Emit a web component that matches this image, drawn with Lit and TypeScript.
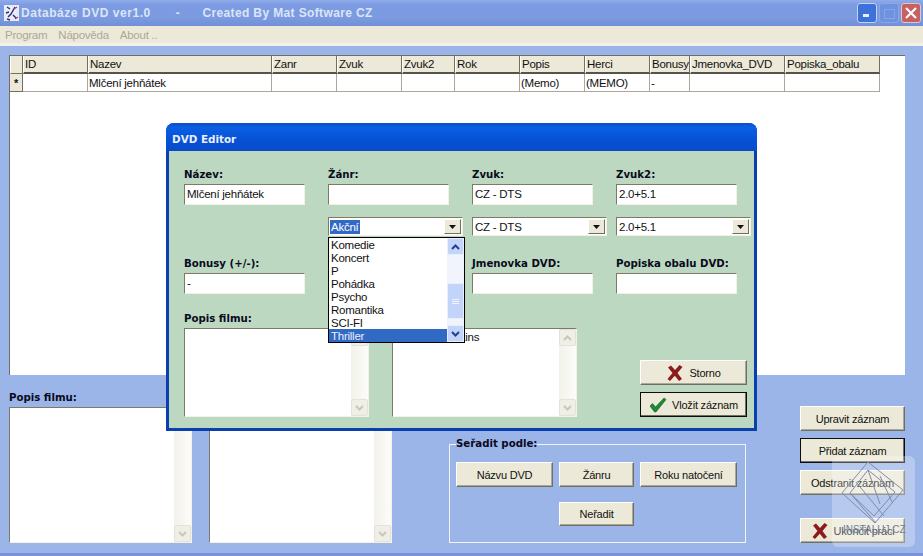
import { LitElement, html, css, svg } from "lit";
import { customElement } from "lit/decorators.js";

const FONT = css`"Liberation Sans", Arial, sans-serif`;

const xIcon = html`<svg class="ico" width="18" height="18" viewBox="0 0 18 18"><path d="M2 3.5 5 1.5 9 6 13.5 1 16.5 3 11.5 9 16 15 13 17 8.8 11.8 4 17 1.5 15 6.5 9Z" fill="#8c1c1c"/></svg>`;
const checkIcon = html`<svg class="ico" width="18" height="16" viewBox="0 0 18 16"><path d="M1 9 3.5 6.5 6.5 10 15 1 17 2.5 7 15 5.5 15Z" fill="#1e8a33" stroke="#0d5a1e" stroke-width=".6"/></svg>`;
const chev = (up: boolean, c: string) => html`<svg width="9" height="6" viewBox="0 0 9 6"><path d=${up ? "M1 5 4.5 1.5 8 5" : "M1 1 4.5 4.5 8 1"} fill="none" stroke=${c} stroke-width="2"/></svg>`;
const arrow = html`<svg width="7" height="4" viewBox="0 0 7 4"><path d="M0 0H7L3.5 4Z" fill="#111"/></svg>`;

const COLS: [string, number][] = [
  ["ID", 65], ["Nazev", 184], ["Zanr", 65], ["Zvuk", 65], ["Zvuk2", 53], ["Rok", 65],
  ["Popis", 65], ["Herci", 65], ["Bonusy", 40], ["Jmenovka_DVD", 95], ["Popiska_obalu", 95],
];
const ROW: string[] = ["", "Mlčení jehňátek", "", "", "", "", "(Memo)", "(MEMO)", "-", "", ""];
const LIST = ["Komedie", "Koncert", "P", "Pohádka", "Psycho", "Romantika", "SCI-FI", "Thriller"];

@customElement("app-root")
export class AppRoot extends LitElement {
  static styles = css`
    :host { display: flex; flex-direction: column; position: relative; width: 923px; height: 556px; overflow: hidden; background: #9bb5e8; font: 11.5px ${FONT}; letter-spacing: -.25px; color: #111; }
    * { box-sizing: border-box; }
    .title { height: 26px; flex: none; display: flex; align-items: center; padding: 0 2px 0 4px; background: linear-gradient(#8fabea 0, #7c9be2 20%, #7b9ae0 70%, #6f8fd8 100%); }
    .title-text { margin-left: 1px; font: bold 12px ${FONT}; color: #dbe5f7; white-space: nowrap; letter-spacing: .55px; }
    .dash { margin-left: 25px; }
    .made { margin-left: 22px; letter-spacing: .37px; }
    .title-gap { flex: 1; }
    .wbtn { width: 20px; height: 20px; border-radius: 3px; margin-left: 2px; display: flex; align-items: center; justify-content: center; border: 1px solid #c4d3f3; }
    .wbtn.min { background: #3d73d9; }
    .wbtn.max { background: #6f92df; border-color: #8ba8e6; }
    .wbtn.close { background: #c8605f; border-color: #e2c4cc; }
    .menu { height: 20px; flex: none; display: flex; gap: 11px; padding: 0 5px 2px; align-items: center; background: linear-gradient(#ece9d8 85%, #f3f1e7 85%); color: #aca899; }
    .main { flex: 1; padding: 9px 18px 0 9px; border-bottom: 3px solid #7a93d8; }
    .grid { height: 320px; background: #fff; border-top: 1px solid #716f64; border-left: 1px solid #716f64; }
    .grow { display: flex; height: 18px; }
    .c { flex: none; padding-left: 1px; border-right: 1px solid #aca899; border-bottom: 1px solid #aca899; line-height: 18px; white-space: nowrap; overflow: hidden; }
    .head .c { background: #ece9d8; border-right-color: #716f64; border-bottom: 2px solid #55534a; line-height: 17px; border-left: 1px solid #fff; }
    .c.ind { width: 13px; background: #ece9d8; text-align: center; border-right: 1px solid #716f64; border-bottom: 1px solid #716f64; padding: 0; font-size: 11px; font-weight: bold; }
    .lower { display: flex; margin-top: 15px; height: 153px; }
    .col { display: flex; flex-direction: column; width: 183px; }
    .col + .col { margin-left: 17px; }
    .lbl { height: 17px; font: bold 10.2px/16px "DejaVu Sans", sans-serif; letter-spacing: 0; white-space: nowrap; color: #0a0a1e; }
    .memo { position: relative; background: #fff; border-top: 1px solid #7d7a68; border-left: 1px solid #7d7a68; border-bottom: 1px solid #f4f2e8; border-right: 1px solid #f4f2e8; display: flex; justify-content: flex-end; }
    .memo .txt { flex: 1; padding: 2px 3px; white-space: nowrap; overflow: hidden; }
    .col .memo { height: 136px; }
    .sb { width: 17px; flex: none; display: flex; flex-direction: column; justify-content: space-between; background: linear-gradient(90deg, #f2f1ea, #fcfcf9); }
    .sb i { display: flex; align-items: center; justify-content: center; height: 17px; background: #f0efe6; border: 1px solid #e4e2d6; border-radius: 2px; }
    fieldset { margin: 47px 0 0 57px; padding: 0 0 0 6px; width: 297px; height: 106px; border: 1px solid #f2f4fa; display: block; }
    legend { padding: 0; font: bold 10.2px/14px "DejaVu Sans", sans-serif; letter-spacing: 0; color: #0a0a1e; }
    .sort { display: grid; grid-template-columns: 97px 75px 97px; grid-template-rows: 25px 24px; gap: 15px 6px; margin-top: 11px; }
    .neradit { grid-column: 2; }
    .btn { display: flex; align-items: center; justify-content: center; gap: 5px; background: #ece9d8; border: 1px solid; border-color: #fff #716f64 #716f64 #fff; box-shadow: inset -1px -1px 0 #aca899; font-size: 11px; letter-spacing: -.2px; white-space: nowrap; }
    .btn.def { border: 1px solid #0c0c0c; box-shadow: inset -1px -1px 0 #716f64; }
    .side { margin-left: 54px; width: 105px; display: flex; flex-direction: column; padding-top: 16px; }
    .side .btn { flex: none; height: 25px; margin-bottom: 7px; }
    .side .btn.last { margin: 16px 0 0; }
    .dlg { position: absolute; left: 166px; top: 123px; width: 591px; height: 308px; border-radius: 8px 8px 0 0; background: #0a3fb0; padding: 0 3px 3px; display: flex; flex-direction: column; }
    .dlg-title { height: 28px; flex: none; margin: 0 -3px; padding: 4px 6px 0; border-radius: 8px 8px 0 0; background: linear-gradient(#0a4fc8 0, #0b5fe4 15%, #0651d6 60%, #0a4bc6 100%); color: #e9effb; font: bold 10.4px/24px "DejaVu Sans", sans-serif; letter-spacing: 0; }
    .dlg-body { flex: 1; background: #bdd8c0; padding: 16px 0 0 15px; display: flex; flex-direction: column; }
    .fields { display: grid; grid-template-columns: repeat(4, 135px); column-gap: 9px; }
    .inp { width: 121px; height: 21px; background: #fff; border: 1px solid; border-color: #7d7a68 #f4f2e8 #f4f2e8 #7d7a68; padding-left: 2px; line-height: 18px; white-space: nowrap; }
    .combo { position: relative; width: 135px; height: 19px; background: #fff; border: 1px solid; border-color: #7d7a68 #f4f2e8 #f4f2e8 #7d7a68; margin-top: 12px; margin-bottom: 20px; display: flex; align-items: center; justify-content: space-between; padding-left: 2px; }
    .combo .arr { width: 17px; height: 15px; margin-right: 1px; background: #ece9d8; border: 1px solid; border-color: #fff #716f64 #716f64 #fff; display: flex; align-items: center; justify-content: center; }
    .sel { background: #316ac5; color: #fff; padding: 0 1px; margin-left: -1px; line-height: 14px; }
    .drop { position: absolute; z-index: 2; left: -1px; top: 19px; width: 137px; height: 106px; background: #fff; border: 1px solid #000; display: flex; }
    .items { flex: 1; }
    .items div { height: 13px; line-height: 15px; padding-left: 2px; }
    .items .hi { background: #316ac5; color: #e8eefc; }
    .dsb { width: 17px; background: #f1f4fc; display: flex; flex-direction: column; position: relative; }
    .dsb b { height: 17px; display: flex; align-items: center; justify-content: center; background: #c3d4fa; border-radius: 2px; border: 1px solid #e8eefc; }
    .dsb .thumb { position: absolute; left: 0; right: 0; top: 45px; height: 36px; background: #c3d4fa; border-radius: 2px; border: 1px solid #e8eefc; display: flex; flex-direction: column; gap: 1px; align-items: center; justify-content: center; }
    .dsb .thumb u { display: block; width: 7px; height: 1px; background: #eef3fe; }
    .dsb .sp { flex: 1; }
    .gap-lbl { margin-top: 17px; }
    .bottom { display: flex; height: 89px; }
    .bottom .memo { width: 185px; height: 89px; }
    .bottom .memo + .memo { margin-left: 23px; }
    .dbtns { margin-left: 63px; width: 107px; display: flex; flex-direction: column; justify-content: flex-end; gap: 7px; }
    .dbtns .btn { height: 25px; }
    .mark { position: absolute; left: 832px; top: 456px; width: 83px; height: 91px; border-radius: 6px; background: rgba(255, 255, 255, .28); color: #6e7c99; font-size: 10px; letter-spacing: 0; pointer-events: none; }
    .mark span { position: absolute; left: 11px; top: 68px; white-space: nowrap; }
    .mark svg { position: absolute; left: 0; top: 0; }
    .ico { flex: none; }
  `;

  private field(label: string, value: string) {
    return html`<div><div class="lbl">${label}</div><div class="inp">${value}</div></div>`;
  }

  private combo(value: string) {
    return html`<div class="combo"><span>${value}</span><span class="arr">${arrow}</span></div>`;
  }

  private sbar() {
    return html`<div class="sb"><i>${chev(true, "#c9c7ba")}</i><i>${chev(false, "#c9c7ba")}</i></div>`;
  }

  render() {
    return html`
      <div class="title">
        <svg width="16" height="17" viewBox="0 0 16 17"><rect width="15" height="16" fill="#e8ecf6"/><path d="M3 2 6 4M11 2 7 9 4 12M2 8 5 7M9 10 12 13M3 14 6 15" stroke="#2b2f7a" stroke-width="1.4" fill="none"/><path d="M10 4 13 2M11 14 14 12" stroke="#b03a6a" stroke-width="1.2"/></svg>
        <span class="title-text">Databáze DVD ver1.0</span>
        <span class="title-text dash">-</span>
        <span class="title-text made">Created By Mat Software CZ</span>
        <span class="title-gap"></span>
        <div class="wbtn min"><svg width="10" height="10" viewBox="0 0 10 10"><rect x="1" y="6" width="6" height="3" fill="#e8eefc"/></svg></div>
        <div class="wbtn max"><svg width="11" height="11" viewBox="0 0 11 11"><rect x=".5" y="1.5" width="10" height="9" fill="none" stroke="#88a5e4"/></svg></div>
        <div class="wbtn close"><svg width="12" height="12" viewBox="0 0 12 12"><path d="M1 1 11 11M11 1 1 11" stroke="#fff" stroke-width="2.2"/></svg></div>
      </div>
      <div class="menu"><span>Program</span><span>Nápověda</span><span>About ..</span></div>
      <div class="main">
        <div class="grid">
          <div class="grow head"><div class="c ind"></div>${COLS.map(([n, w]) => html`<div class="c" style="width:${w}px">${n}</div>`)}</div>
          <div class="grow"><div class="c ind">*</div>${COLS.map(([, w], i) => html`<div class="c" style="width:${w}px">${ROW[i]}</div>`)}</div>
        </div>
        <div class="lower">
          <div class="col"><div class="lbl">Popis filmu:</div><div class="memo">${this.sbar()}</div></div>
          <div class="col"><div class="lbl"></div><div class="memo">${this.sbar()}</div></div>
          <fieldset>
            <legend>Seřadit podle:</legend>
            <div class="sort">
              <div class="btn">Názvu DVD</div><div class="btn">Žánru</div><div class="btn">Roku natočení</div>
              <div class="btn neradit">Neřadit</div>
            </div>
          </fieldset>
          <div class="side">
            <div class="btn">Upravit záznam</div>
            <div class="btn def">Přidat záznam</div>
            <div class="btn">Odstranit záznam</div>
            <div class="btn last">${xIcon}Ukončit práci</div>
          </div>
        </div>
      </div>
      <div class="dlg">
        <div class="dlg-title">DVD Editor</div>
        <div class="dlg-body">
          <div class="fields">
            ${this.field("Název:", "Mlčení jehňátek")}
            ${this.field("Žánr:", "")}
            ${this.field("Zvuk:", "CZ - DTS")}
            ${this.field("Zvuk2:", "2.0+5.1")}
            <div></div>
            <div class="combo"><span class="sel">Akční</span><span class="arr">${arrow}</span>
              <div class="drop">
                <div class="items">${LIST.map((t) => html`<div class=${t === "Thriller" ? "hi" : ""}>${t}</div>`)}</div>
                <div class="dsb"><b>${chev(true, "#26408c")}</b><div class="sp"></div><div class="thumb"><u></u><u></u><u></u></div><b>${chev(false, "#26408c")}</b></div>
              </div>
            </div>
            ${this.combo("CZ - DTS")}
            ${this.combo("2.0+5.1")}
            ${this.field("Bonusy (+/-):", "-")}
            ${this.field("", "")}
            ${this.field("Jmenovka DVD:", "")}
            ${this.field("Popiska obalu DVD:", "")}
          </div>
          <div class="lbl gap-lbl">Popis filmu:</div>
          <div class="bottom">
            <div class="memo">${this.sbar()}</div>
            <div class="memo"><div class="txt">Anthony Hopkins</div>${this.sbar()}</div>
            <div class="dbtns">
              <div class="btn">${xIcon}Storno</div>
              <div class="btn def">${checkIcon}Vložit záznam</div>
            </div>
          </div>
        </div>
      </div>
      <div class="mark">
        <svg width="83" height="91" viewBox="0 0 83 91" fill="none" stroke="#7f8ca8" stroke-width="1">
          ${svg`<path d="M36 6 71 34 43 67 10 37Z"/><path d="M36 14 63 36 42 60 18 37Z"/><path d="M24 26 52 60M36 14 48 48M48 20 60 46M18 37 44 67"/>`}
        </svg>
        <span>INSTALUJ.CZ</span>
      </div>
    `;
  }
}
